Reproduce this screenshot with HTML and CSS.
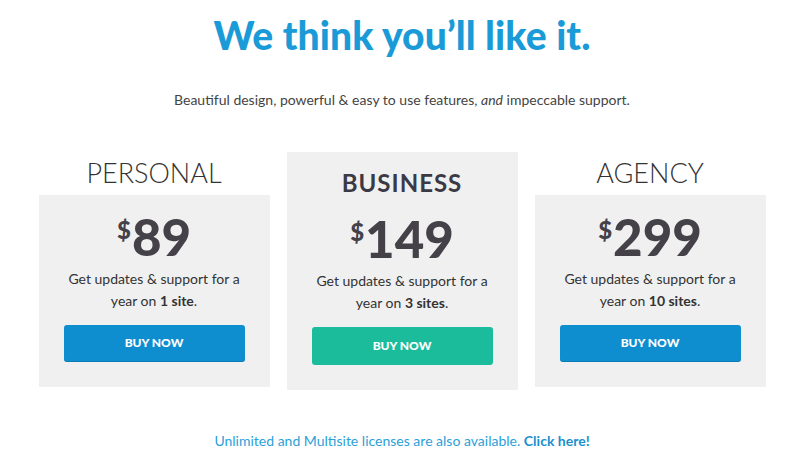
FILE: index.html
```html
<!DOCTYPE html>
<html lang="en">
<head>
<meta charset="utf-8">
<title>Pricing</title>
<link rel="stylesheet" href="styles.css">
</head>
<body>
<main class="page">
  <h1 class="headline">We think you’ll like it.</h1>
  <p class="lead">Beautiful design, powerful &amp; easy to use features, <em>and</em> impeccable support.</p>

  <section class="plans">
    <div class="plan plan-side">
      <h2 class="plan-name">PERSONAL</h2>
      <div class="plan-box">
        <div class="price"><span class="currency">$</span>89</div>
        <p class="desc">Get updates &amp; support for a year on <strong>1 site</strong>.</p>
        <a class="btn btn-blue" href="#">BUY NOW</a>
      </div>
    </div>

    <div class="plan plan-featured">
      <div class="plan-box plan-box-featured">
        <h2 class="plan-name plan-name-featured">BUSINESS</h2>
        <div class="price"><span class="currency">$</span>149</div>
        <p class="desc">Get updates &amp; support for a year on <strong>3 sites</strong>.</p>
        <a class="btn btn-green" href="#">BUY NOW</a>
      </div>
    </div>

    <div class="plan plan-side">
      <h2 class="plan-name">AGENCY</h2>
      <div class="plan-box">
        <div class="price"><span class="currency">$</span>299</div>
        <p class="desc">Get updates &amp; support for a year on <strong>10 sites</strong>.</p>
        <a class="btn btn-blue" href="#">BUY NOW</a>
      </div>
    </div>
  </section>

  <p class="footer-note">Unlimited and Multisite licenses are also available. <a href="#">Click here!</a></p>
</main>
</body>
</html>
```

FILE: styles.css
```css
* { box-sizing: border-box; }

html, body {
  margin: 0;
  padding: 0;
  background: #ffffff;
}

body {
  font-family: Lato, "Liberation Sans", sans-serif;
  color: #444;
}

.page {
  width: 800px;
  padding: 0 0 0 4px;
  text-align: center;
}

.headline {
  margin: 0;
  padding-top: 12px;
  font-size: 39px;
  line-height: 46px;
  font-weight: 900;
  color: #1a9bd7;
  letter-spacing: 0.1px;
}

.lead {
  margin: 32px 0 0;
  font-size: 14px;
  line-height: 20px;
  color: #444;
}

.lead em { font-style: italic; }

.plans {
  display: flex;
  justify-content: center;
  align-items: flex-start;
  gap: 17px;
  margin-top: 42px;
}

.plan {
  width: 231px;
}

.plan-side {
  padding-top: 4px;
}

.plan-name {
  margin: 0 0 5px;
  font-size: 27px;
  line-height: 34px;
  font-weight: 300;
  color: #333;
  letter-spacing: 0;
}

.plan-box {
  background: #f0f0f0;
  padding: 16px 18px 25px;
}

.plan-name-featured {
  margin: 0 0 15px;
  font-size: 24px;
  line-height: 30px;
  font-weight: 700;
  color: #3b3a44;
  letter-spacing: 1px;
}

.price {
  height: 51px;
  font-size: 51px;
  line-height: 51px;
  font-weight: 900;
  color: #444149;
}

.currency {
  font-size: 24px;
  line-height: 38px;
  vertical-align: top;
  margin-right: 1px;
}

.desc {
  margin: 6px auto 13px;
  max-width: 185px;
  font-size: 14px;
  line-height: 22px;
  color: #333;
}

.desc strong { font-weight: 700; }

.btn {
  display: block;
  margin: 0 7px;
  height: 37px;
  line-height: 37px;
  border-radius: 3px;
  color: #fff;
  font-size: 12px;
  font-weight: 900;
  text-decoration: none;
}

.btn-blue {
  background: #0e8ecf;
  border-bottom: 1px solid #0b7cb6;
  line-height: 36px;
}

.btn-green {
  background: #1abc9c;
  height: 38px;
  line-height: 38px;
}

.footer-note {
  margin: 42px 0 0;
  font-size: 14px;
  line-height: 18px;
  color: #2b9fd8;
}

.footer-note a {
  color: #1b8fcf;
  font-weight: 700;
  text-decoration: none;
}
```
